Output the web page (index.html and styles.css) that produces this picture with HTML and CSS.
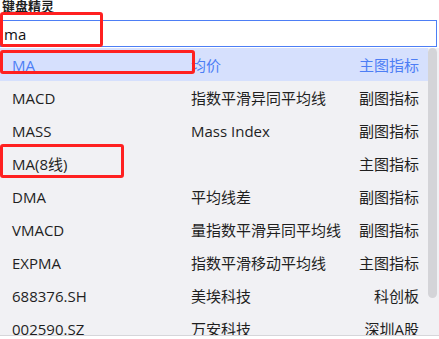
FILE: index.html
```html
<!DOCTYPE html>
<html lang="zh-CN">
<head>
  <meta charset="UTF-8" />
  <meta name="viewport" content="width=device-width, initial-scale=1" />
  <title>键盘精灵</title>
  <link rel="stylesheet" href="styles.css">
</head>
<body>
  <div class="wizard">
    <div class="wizard-title">键盘精灵</div>
    <input class="wizard-input" type="text" value="ma" />
    <div class="results">
      <div class="list" id="list"></div>
      <div class="scrollbar">
        <div class="thumb"></div>
      </div>
    </div>

    <!-- segni rossi di annotazione -->
    <div class="mark mark-input"></div>
    <div class="mark mark-first"></div>
    <div class="mark mark-ma8"></div>
  </div>

  <script>
    const items = [
      { code: "MA", name: "均价", type: "主图指标", active: true },
      { code: "MACD", name: "指数平滑异同平均线", type: "副图指标" },
      { code: "MASS", name: "Mass Index", type: "副图指标" },
      { code: "MA(8线)", name: "", type: "主图指标" },
      { code: "DMA", name: "平均线差", type: "副图指标" },
      { code: "VMACD", name: "量指数平滑异同平均线", type: "副图指标" },
      { code: "EXPMA", name: "指数平滑移动平均线", type: "主图指标" },
      { code: "688376.SH", name: "美埃科技", type: "科创板" },
      { code: "002590.SZ", name: "万安科技", type: "深圳A股" }
    ];

    const list = document.getElementById('list');

    items.forEach(item => {
      const row = document.createElement('div');
      row.className = item.active ? 'row active' : 'row';

      ['code', 'name', 'type'].forEach(key => {
        const cell = document.createElement('span');
        cell.className = key;
        cell.textContent = item[key];
        row.appendChild(cell);
      });

      list.appendChild(row);
    });
  </script>
</body>
</html>
```

FILE: styles.css
```css
body {
  margin: 0;
  background: #fff;
  color: #1f1f1f;
  font-family: "Open Sans", "Noto Sans CJK SC", sans-serif;
}
.wizard {
  position: relative;
  width: 439px;
}
.wizard-title {
  height: 20px;
  line-height: 12px;
  padding-left: 2px;
  font-size: 13px;
  font-weight: 700;
  font-family: "Noto Sans CJK SC", sans-serif;
}
.wizard-input {
  display: block;
  width: 437px;
  height: 27px;
  box-sizing: border-box;
  margin: 0;
  padding: 0 3px;
  border: 1px solid #4d7ef5;
  outline: none;
  font-family: inherit;
  font-size: 15px;
  color: #111;
}
.results {
  margin-top: 1px;
  height: 287px;
  display: flex;
  overflow: hidden;
  background: #f1f1f4;
  border-bottom: 1px solid #d6d6da;
}
.list {
  flex: 1;
  min-width: 0;
}
.scrollbar {
  width: 11px;
  flex-shrink: 0;
  padding-right: 2px;
  box-sizing: border-box;
}
.thumb {
  height: 250px;
  background: #d4d4d8;
  border-radius: 5px;
}
.row {
  display: grid;
  grid-template-columns: 179px 1fr auto;
  align-items: center;
  height: 33px;
  padding: 0 9px 0 12px;
  font-size: 15px;
  white-space: nowrap;
}
.row.active {
  background: #d6e0fd;
  color: #4d7ef5;
}
.type {
  text-align: right;
}
.mark {
  position: absolute;
  border: 3px solid #ff2020;
  border-radius: 3px;
  box-sizing: border-box;
}
.mark-input {
  left: 0;
  top: 12px;
  width: 103px;
  height: 35px;
}
.mark-first {
  left: 0;
  top: 50px;
  width: 195px;
  height: 24px;
}
.mark-ma8 {
  left: 0;
  top: 144px;
  width: 124px;
  height: 34px;
}
```
